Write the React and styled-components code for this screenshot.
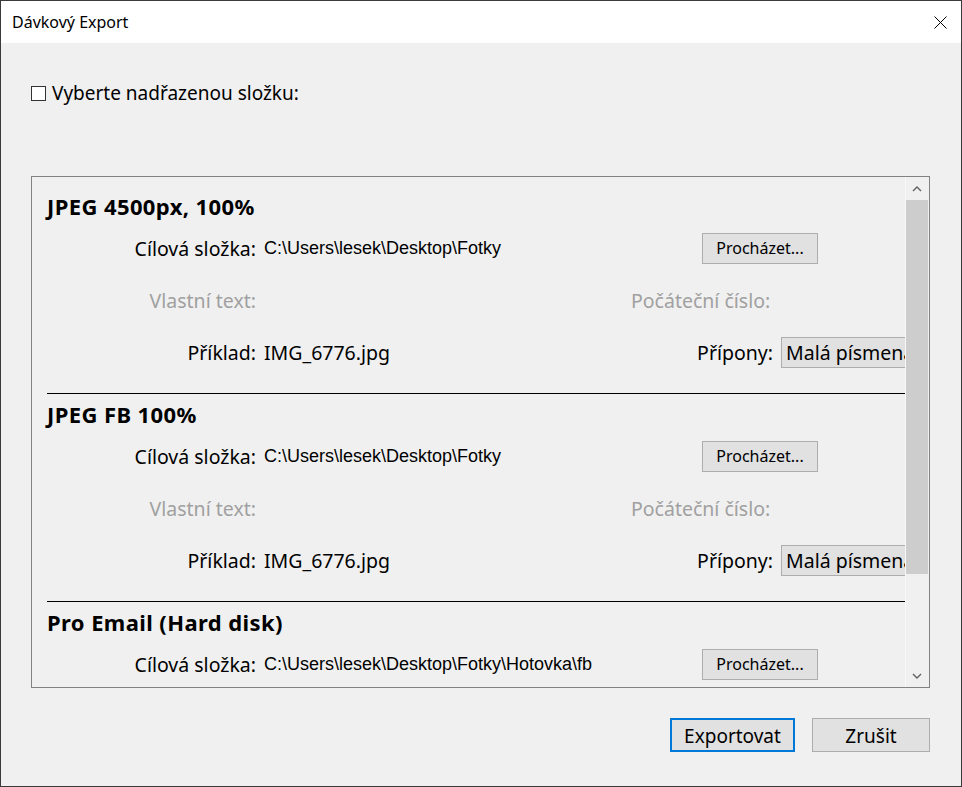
import React from 'react'
import styled, { createGlobalStyle } from 'styled-components'

const Global = createGlobalStyle`
  html, body { margin: 0; padding: 0; background: #f0f0f0; }
  * { box-sizing: border-box; }
`

const UI = `"Noto Sans", "Open Sans", sans-serif`

const Window = styled.div`
  width: 962px;
  height: 787px;
  border: 1px solid #3a3a3a;
  background: #f0f0f0;
  display: flex;
  flex-direction: column;
  font-family: ${UI};
  color: #000;
  overflow: hidden;
`

const TitleBar = styled.div`
  height: 42px;
  flex-shrink: 0;
  background: #fff;
  display: flex;
  align-items: center;
  justify-content: space-between;
  padding: 0 14px 0 11px;
  font-size: 16px;
`

const CloseBtn = styled.div`
  width: 14px;
  height: 14px;
  display: flex;
  align-items: center;
  justify-content: center;
`

const Body = styled.div`
  flex: 1;
  display: flex;
  flex-direction: column;
  padding: 38px 31px 0 30px;
`

const CheckRow = styled.label`
  display: flex;
  align-items: center;
  gap: 6px;
  font-size: 19px;
  height: 23px;
`

const Box = styled.span`
  width: 15px;
  height: 15px;
  border: 1px solid #333;
  background: #fff;
  margin-top: 1px;
`

const Panel = styled.div`
  margin-top: 72px;
  height: 512px;
  border: 1px solid #828282;
  display: flex;
  overflow: hidden;
`

const Content = styled.div`
  flex: 1;
  overflow: hidden;
  padding-top: 9px;
`

const Section = styled.div`
  padding-bottom: 15px;
  border-bottom: ${p => (p.$last ? 'none' : '1px solid #000')};
  margin-left: 15px;
`

const Heading = styled.div`
  height: 36px;
  padding-top: 4px;
  display: flex;
  align-items: center;
  font-size: 22px;
  letter-spacing: 0.4px;
  font-weight: 700;
  white-space: nowrap;
`

const Row = styled.div`
  height: 52px;
  display: flex;
  align-items: center;
  margin-left: -15px;
`

const Label = styled.div`
  width: 224px;
  flex-shrink: 0;
  text-align: right;
  font-size: 19.5px;
  white-space: nowrap;
  color: ${p => (p.$dim ? '#a0a0a0' : '#000')};
`

const Value = styled.div`
  flex: 1;
  padding-left: 8px;
  font-size: ${p => (p.$path ? '18px' : '19.5px')};
  font-family: ${p => (p.$path ? '"Liberation Sans", Arial, sans-serif' : UI)};
  white-space: nowrap;
  overflow: hidden;
`

const Right = styled.div`
  width: 286px;
  flex-shrink: 0;
  display: flex;
  align-items: center;
  padding-left: ${p => p.$offset || 0}px;
`

const SideLabel = styled.div`
  font-size: 19.5px;
  white-space: nowrap;
  color: ${p => (p.$dim ? '#a0a0a0' : '#000')};
  width: ${p => (p.$w ? p.$w + 'px' : 'auto')};
  text-align: right;
  flex-shrink: 0;
`

const Browse = styled.button`
  width: 116px;
  height: 31px;
  background: #e1e1e1;
  border: 1px solid #adadad;
  font-family: ${UI};
  font-size: 16px;
  color: #000;
  padding: 0;
`

const Select = styled.div`
  margin-left: 8px;
  width: 150px;
  flex-shrink: 0;
  height: 31px;
  background: #e1e1e1;
  border: 1px solid #adadad;
  display: flex;
  align-items: center;
  padding-left: 4px;
  font-size: 19.5px;
  white-space: nowrap;
`

const Scrollbar = styled.div`
  width: 24px;
  flex-shrink: 0;
  display: flex;
  flex-direction: column;
  background: #f0f0f0;
  border-left: 1px solid #f8f8f8;
  padding-right: 1px;
`

const Arrow = styled.div`
  height: 23px;
  display: flex;
  align-items: center;
  justify-content: center;
`

const Track = styled.div`
  flex: 1;
  display: flex;
  flex-direction: column;
`

const Thumb = styled.div`
  height: 374px;
  background: #cdcdcd;
`

const Footer = styled.div`
  display: flex;
  justify-content: flex-end;
  gap: 17px;
  margin-top: 30px;
`

const DlgButton = styled.button`
  width: ${p => p.$w}px;
  height: 34px;
  background: #e1e1e1;
  border: ${p => (p.$primary ? '2px solid #0078d7' : '1px solid #adadad')};
  font-family: ${UI};
  font-size: 19px;
  line-height: 1;
  color: #000;
  padding: 3px 0 0;
`

const sections = [
  { name: 'JPEG 4500px, 100%', path: 'C:\\Users\\lesek\\Desktop\\Fotky' },
  { name: 'JPEG FB 100%', path: 'C:\\Users\\lesek\\Desktop\\Fotky' },
  { name: 'Pro Email (Hard disk)', path: 'C:\\Users\\lesek\\Desktop\\Fotky\\Hotovka\\fb' }
]

const Chevron = ({ down }) => (
  <svg width="10" height="6" viewBox="0 0 10 6">
    <path
      d={down ? 'M1 1 L5 5 L9 1' : 'M1 5 L5 1 L9 5'}
      fill="none"
      stroke="#606060"
      strokeWidth="1.4"
    />
  </svg>
)

export default function App() {
  return (
    <>
      <Global />
      <Window>
        <TitleBar>
          <span>Dávkový Export</span>
          <CloseBtn>
            <svg width="13" height="13" viewBox="0 0 13 13">
              <path d="M0.5 0.5 L12.5 12.5 M12.5 0.5 L0.5 12.5" stroke="#000" strokeWidth="1" />
            </svg>
          </CloseBtn>
        </TitleBar>
        <Body>
          <CheckRow>
            <Box />
            Vyberte nadřazenou složku:
          </CheckRow>
          <Panel>
            <Content>
              {sections.map((s, i) => (
                <Section key={i} $last={i === sections.length - 1}>
                  <Heading>{s.name}</Heading>
                  <Row>
                    <Label>Cílová složka:</Label>
                    <Value $path>{s.path}</Value>
                    <Right $offset={83}>
                      <Browse>Procházet...</Browse>
                    </Right>
                  </Row>
                  <Row>
                    <Label $dim>Vlastní text:</Label>
                    <Value />
                    <Right $offset={12}>
                      <SideLabel $dim>Počáteční číslo:</SideLabel>
                    </Right>
                  </Row>
                  <Row>
                    <Label>Příklad:</Label>
                    <Value>IMG_6776.jpg</Value>
                    <Right>
                      <SideLabel $w={154}>Přípony:</SideLabel>
                      <Select>Malá písmena</Select>
                    </Right>
                  </Row>
                </Section>
              ))}
            </Content>
            <Scrollbar>
              <Arrow><Chevron /></Arrow>
              <Track><Thumb /></Track>
              <Arrow><Chevron down /></Arrow>
            </Scrollbar>
          </Panel>
          <Footer>
            <DlgButton $primary $w={125}>Exportovat</DlgButton>
            <DlgButton $w={118}>Zrušit</DlgButton>
          </Footer>
        </Body>
      </Window>
    </>
  )
}
